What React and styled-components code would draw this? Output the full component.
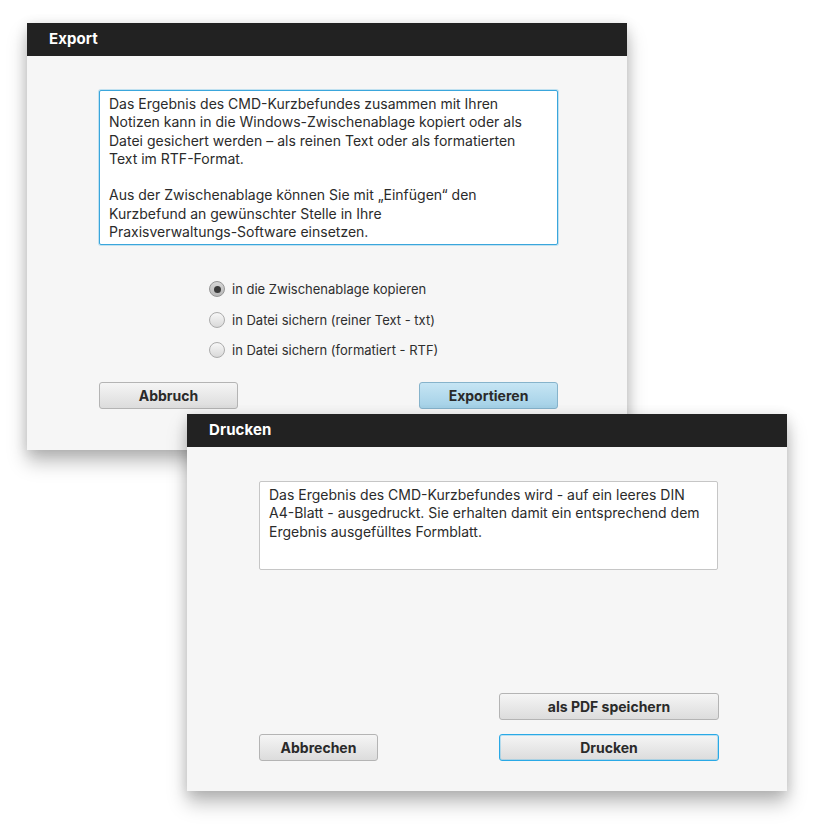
import React from "react";
import styled, { createGlobalStyle, css } from "styled-components";

const Global = createGlobalStyle`
  html, body { margin: 0; padding: 0; background: #ffffff; }
  body { font-family: Inter, "Noto Sans", "Liberation Sans", sans-serif; }
  * { box-sizing: border-box; }
`;

const Desktop = styled.div`
  position: relative;
  width: 825px;
  height: 830px;
  background: #ffffff;
  overflow: hidden;
`;

const Window = styled.section`
  position: absolute;
  left: ${(p) => p.$x}px;
  top: ${(p) => p.$y}px;
  width: 600px;
  height: ${(p) => p.$h}px;
  background: #f6f6f6;
  display: flex;
  flex-direction: column;
  box-shadow: 0 12px 18px rgba(0, 0, 0, 0.26), 0 2px 12px rgba(0, 0, 0, 0.12);
`;

const TitleBar = styled.header`
  height: 33px;
  flex: none;
  background: #222222;
  color: #ffffff;
  display: flex;
  align-items: center;
  padding: 0 0 3px 22px;
  font-size: 15px;
  font-weight: 700;
  letter-spacing: 0.1px;
`;

const Body = styled.div`
  flex: 1;
  display: flex;
  flex-direction: column;
  padding: 34px 69px ${(p) => p.$pb || 0}px 72px;
`;

const TextBox = styled.div`
  height: ${(p) => p.$h}px;
  flex: none;
  background: #ffffff;
  border: 1px solid ${(p) => (p.$focus ? "#3aa6dc" : "#c6c6c6")};
  border-radius: 2px;
  ${(p) =>
    p.$focus &&
    css`
      box-shadow: 0 0 0 1px rgba(95, 185, 230, 0.35);
    `}
  padding: 4px 9px;
  font-size: 14px;
  line-height: 18.3px;
  color: #2b2b2b;
  white-space: pre-line;
`;

const RadioGroup = styled.div`
  margin-top: 29px;
  padding-left: 110px;
  display: flex;
  flex-direction: column;
`;

const RadioRow = styled.label`
  height: 30.5px;
  display: flex;
  align-items: center;
  gap: 7px;
  font-size: 13px;
  color: #2e2e2e;
`;

const RadioCircle = styled.span`
  width: 16px;
  height: 16px;
  border-radius: 50%;
  flex: none;
  border: 1px solid ${(p) => (p.$on ? "#959595" : "#ababab")};
  background: ${(p) =>
    p.$on
      ? "linear-gradient(#d6d6d6, #b8b8b8)"
      : "linear-gradient(#f7f7f7, #d9d9d9)"};
  display: flex;
  align-items: center;
  justify-content: center;
  &::after {
    content: "";
    display: ${(p) => (p.$on ? "block" : "none")};
    width: 7px;
    height: 7px;
    border-radius: 50%;
    background: #3a3a3a;
  }
`;

const ButtonRow = styled.div`
  margin-top: ${(p) => p.$mt || 0}px;
  display: flex;
  justify-content: space-between;
  align-items: center;
`;

const Spacer = styled.div`
  flex: 1;
`;

const Button = styled.button`
  width: ${(p) => p.$w}px;
  height: 27px;
  border-radius: 3px;
  font-family: inherit;
  font-size: 14px;
  font-weight: 700;
  color: #2a2a2a;
  padding: 0;
  border: 1px solid #b4b4b4;
  background: linear-gradient(#f5f5f5, #dcdcdc);
  ${(p) =>
    p.$variant === "primary" &&
    css`
      border-color: #86b3cb;
      background: linear-gradient(#c6e5f4, #a3d0e6);
    `}
  ${(p) =>
    p.$variant === "focus" &&
    css`
      border-color: #29a9e6;
      box-shadow: inset 0 0 0 1px rgba(80, 185, 235, 0.35);
    `}
`;

const ButtonStack = styled.div`
  display: flex;
  flex-direction: column;
  gap: 14px;
`;

const DruckenRow = styled.div`
  display: flex;
  justify-content: space-between;
  align-items: flex-end;
  margin-right: -1px;
`;

export default function App() {
  return (
    <>
      <Global />
      <Desktop>
        <Window $x={27} $y={23} $h={427}>
          <TitleBar>Export</TitleBar>
          <Body>
            <TextBox $h={155} $focus>
              {"Das Ergebnis des CMD-Kurzbefundes zusammen mit Ihren\nNotizen kann in die Windows-Zwischenablage kopiert oder als\nDatei gesichert werden – als reinen Text oder als formatierten\nText im RTF-Format.\n\nAus der Zwischenablage können Sie mit „Einfügen“ den\nKurzbefund an gewünschter Stelle in Ihre\nPraxisverwaltungs-Software einsetzen."}
            </TextBox>
            <RadioGroup>
              <RadioRow>
                <RadioCircle $on />
                in die Zwischenablage kopieren
              </RadioRow>
              <RadioRow>
                <RadioCircle />
                in Datei sichern (reiner Text - txt)
              </RadioRow>
              <RadioRow>
                <RadioCircle />
                in Datei sichern (formatiert - RTF)
              </RadioRow>
            </RadioGroup>
            <ButtonRow $mt={16.5}>
              <Button $w={139}>Abbruch</Button>
              <Button $w={139} $variant="primary">
                Exportieren
              </Button>
            </ButtonRow>
          </Body>
        </Window>

        <Window $x={187} $y={414} $h={377}>
          <TitleBar>Drucken</TitleBar>
          <Body $pb={30}>
            <TextBox $h={89}>
              {"Das Ergebnis des CMD-Kurzbefundes wird - auf ein leeres DIN\nA4-Blatt - ausgedruckt. Sie erhalten damit ein entsprechend dem\nErgebnis ausgefülltes Formblatt."}
            </TextBox>
            <Spacer />
            <DruckenRow>
              <Button $w={119}>Abbrechen</Button>
              <ButtonStack>
                <Button $w={220}>als PDF speichern</Button>
                <Button $w={220} $variant="focus">
                  Drucken
                </Button>
              </ButtonStack>
            </DruckenRow>
          </Body>
        </Window>
      </Desktop>
    </>
  );
}
